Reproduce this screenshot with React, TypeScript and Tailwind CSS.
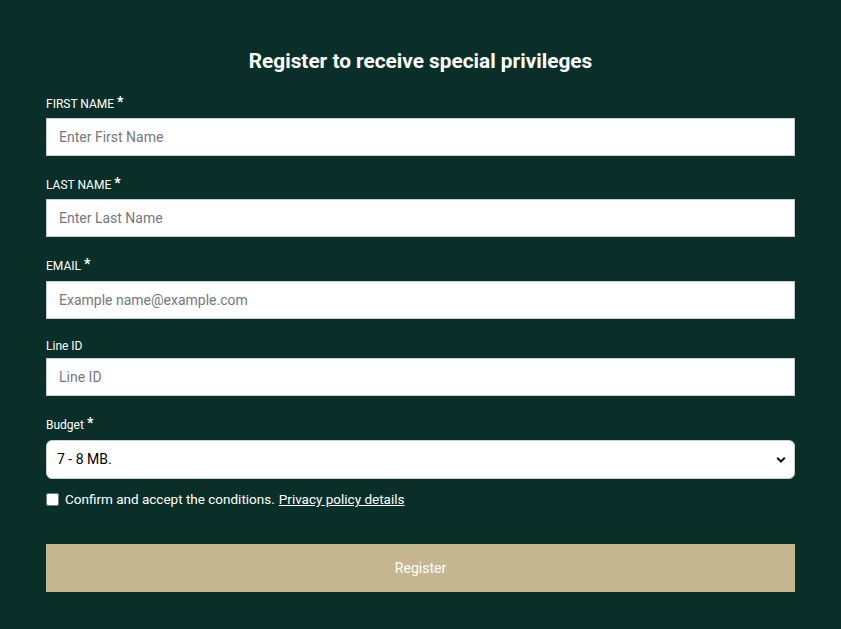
import React, { useState } from 'react';

const Label = ({ text, required, extra }: { text: string; required?: boolean; extra?: boolean }) => (
  <label
    className={`flex items-start text-[12px] leading-[15px] text-white ${required ? 'h-[19px]' : 'h-[15px]'} ${extra ? 'mb-[5px]' : 'mb-1'}`}
  >
    <span className={required ? 'mt-[2px]' : ''}>{text}</span>
    {required && <span className="ml-[3px] text-[14px] leading-[14px] font-bold">*</span>}
  </label>
);

const TextField = ({
  label,
  placeholder,
  required,
  extra,
}: {
  label: string;
  placeholder: string;
  required?: boolean;
  extra?: boolean;
}) => (
  <div className="mb-5">
    <Label text={label} required={required} extra={extra} />
    <input
      type="text"
      placeholder={placeholder}
      className="block h-[38px] w-full border border-[#c8ccce] bg-white px-3 text-[14px] text-[#333] placeholder:text-[#75787a] outline-none"
    />
  </div>
);

export default function App() {
  const [budget, setBudget] = useState('7-8');
  const [agree, setAgree] = useState(false);

  return (
    <div className="min-h-[629px] w-full bg-[#0a2f29] font-['Roboto','Liberation_Sans',sans-serif]">
      <div className="mx-auto w-[749px] pt-[48px] pb-[37px]">
        <h1 className="mb-[21px] text-center text-[20.8px] leading-[26px] font-bold text-white">
          Register to receive special privileges
        </h1>

        <TextField label="FIRST NAME" placeholder="Enter First Name" required />
        <TextField label="LAST NAME" placeholder="Enter Last Name" required />
        <TextField label="EMAIL" placeholder="Example name@example.com" required extra />
        <TextField label="Line ID" placeholder="Line ID" />

        <div className="mb-[10px]">
          <Label text="Budget" required extra />
          <div className="relative">
            <select
              value={budget}
              onChange={(e) => setBudget(e.target.value)}
              className="block h-[39px] w-full appearance-none rounded-[6px] border border-[#c8ccce] bg-white pl-[10px] pr-8 text-[14px] text-black outline-none"
            >
              <option value="5-6">5 - 6 MB.</option>
              <option value="7-8">7 - 8 MB.</option>
              <option value="9-10">9 - 10 MB.</option>
            </select>
            <svg
              className="pointer-events-none absolute right-[9px] top-1/2 -translate-y-1/2"
              width="10"
              height="7"
              viewBox="0 0 10 7"
              fill="none"
            >
              <path d="M1.2 1.2 5 5 8.8 1.2" stroke="#111" strokeWidth="2" />
            </svg>
          </div>
        </div>

        <div className="flex items-center text-[13.5px] text-white">
          <input
            type="checkbox"
            checked={agree}
            onChange={(e) => setAgree(e.target.checked)}
            className="mr-[6px] h-[13px] w-[13px]"
          />
          <span>Confirm and accept the conditions.</span>
          <a href="#" className="ml-[4px] underline">Privacy policy details</a>
        </div>

        <button className="mt-[35px] h-[48px] w-full bg-[#c4b68f] text-[14px] text-white">
          Register
        </button>
      </div>
    </div>
  );
}
